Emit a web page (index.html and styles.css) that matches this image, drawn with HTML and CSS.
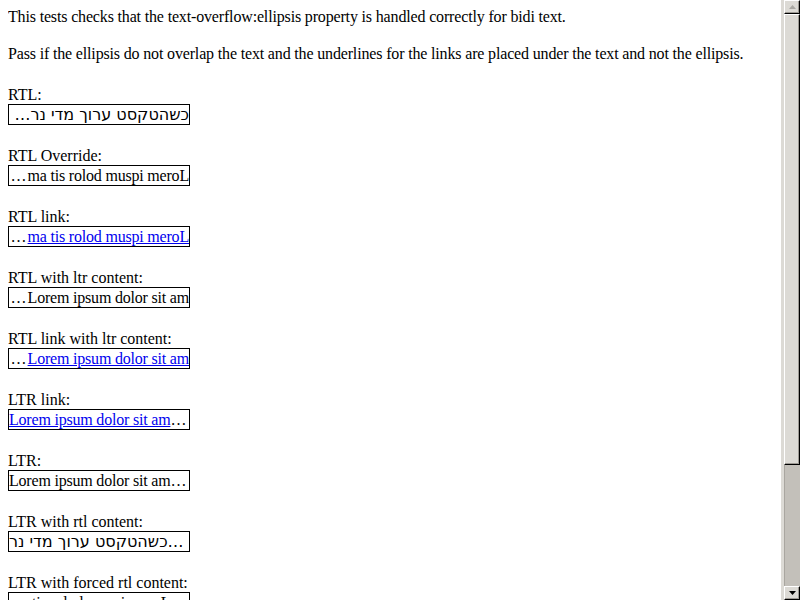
FILE: index.html
```html
<!DOCTYPE html>
<html>
<head>
<meta charset="utf-8">
<link rel="stylesheet" href="styles.css">
</head>
<body>
<p class="intro">This tests checks that the text-overflow:ellipsis property is handled correctly for bidi text.</p>
<p class="intro last">Pass if the ellipsis do not overlap the text and the underlines for the links are placed under the text and not the ellipsis.</p>

<div class="test">
  <div class="label">RTL:</div>
  <div class="box rtl heb">כשהטקסט ערוך מדי נר…</div>
</div>

<div class="test">
  <div class="label">RTL Override:</div>
  <div class="box rtl latin"><bdo dir="rtl">Lorem ipsum dolor sit am<span class="ell">…</span></bdo></div>
</div>

<div class="test">
  <div class="label">RTL link:</div>
  <div class="box rtl latin"><bdo dir="rtl"><a href="#">Lorem ipsum dolor sit am</a><span class="ell">…</span></bdo></div>
</div>

<div class="test">
  <div class="label">RTL with ltr content:</div>
  <div class="box rtl latin"><span dir="ltr" class="iso"><span class="ell">…</span>Lorem ipsum dolor sit am</span></div>
</div>

<div class="test">
  <div class="label">RTL link with ltr content:</div>
  <div class="box rtl latin"><span dir="ltr" class="iso"><span class="ell">…</span><a href="#">Lorem ipsum dolor sit am</a></span></div>
</div>

<div class="test">
  <div class="label">LTR link:</div>
  <div class="box latin"><a href="#">Lorem ipsum dolor sit am</a>…</div>
</div>

<div class="test">
  <div class="label">LTR:</div>
  <div class="box latin">Lorem ipsum dolor sit am…</div>
</div>

<div class="test">
  <div class="label">LTR with rtl content:</div>
  <div class="box heb"><span dir="rtl" class="iso">כשהטקסט ערוך מדי נר</span>…</div>
</div>

<div class="test">
  <div class="label">LTR with forced rtl content:</div>
  <div class="box latin"><bdo dir="rtl">Lorem ipsum dolor sit am</bdo>…</div>
</div>

<div class="test">
  <div class="label">LTR link with rtl content:</div>
  <div class="box heb"><a href="#"><span dir="rtl" class="iso">כשהטקסט ערוך מדי נר</span></a>…</div>
</div>

<div class="test">
  <div class="label">LTR link with forced rtl content:</div>
  <div class="box latin"><a href="#"><bdo dir="rtl">Lorem ipsum dolor sit am</bdo></a>…</div>
</div>

<div class="scrollbar" aria-hidden="true">
  <div class="sb-btn">
    <svg width="7" height="4" viewBox="0 0 7 4"><polygon points="0,4 7,4 3.5,0" fill="#a9a7a2"/></svg>
  </div>
  <div class="sb-thumb"></div>
  <div class="sb-track"></div>
  <div class="sb-btn">
    <svg width="7" height="4" viewBox="0 0 7 4"><polygon points="0,0 7,0 3.5,4" fill="#000"/></svg>
  </div>
</div>
</body>
</html>
```

FILE: styles.css
```css
html {
  background: #fff;
}

body {
  margin: 8px;
  font-family: "Liberation Serif", "Times New Roman", serif;
  font-size: 16px;
  color: #000;
}

.intro {
  margin: 0 0 19px;
  line-height: 18px;
  letter-spacing: -0.16px;
}

.intro.last {
  margin-bottom: 23px;
}

.test {
  margin-bottom: 22px;
}

.label {
  line-height: 18px;
}

.box {
  width: 180px;
  height: 19px;
  line-height: 19px;
  border: 1px solid #000;
  overflow: hidden;
  white-space: nowrap;
}

.latin {
  letter-spacing: -0.2px;
}

.rtl {
  direction: rtl;
}

.ell {
  padding-right: 1px;
  letter-spacing: 0;
}

.heb {
  font-family: "DejaVu Sans", "Liberation Serif", sans-serif;
  font-size: 16px;
}

.iso {
  unicode-bidi: isolate;
}

a {
  color: #0000ee;
  text-decoration: underline;
}

/* drawn scrollbar overlaying the right edge */
.scrollbar {
  position: fixed;
  top: 0;
  right: 0;
  width: 19px;
  height: 100vh;
  box-sizing: border-box;
  padding-left: 3px;
  background: #dcdad5;
  display: flex;
  flex-direction: column;
}

.sb-btn {
  height: 14px;
  box-sizing: border-box;
  background: #dcdad5;
  border: 1px solid;
  border-color: #ffffff #000000 #000000 #ffffff;
  box-shadow: inset -1px -1px #9d9a94;
  display: flex;
  align-items: center;
  justify-content: center;
}

.sb-btn svg {
  display: block;
}

.sb-thumb {
  height: 451px;
  box-sizing: border-box;
  background: #dcdad5;
  border: 1px solid;
  border-color: #ffffff #000000 #000000 #ffffff;
  box-shadow: inset -1px -1px #9d9a94;
}

.sb-track {
  flex: 1;
  background: #c3c0ba;
  border-left: 1px solid #a9a6a0;
}
```
